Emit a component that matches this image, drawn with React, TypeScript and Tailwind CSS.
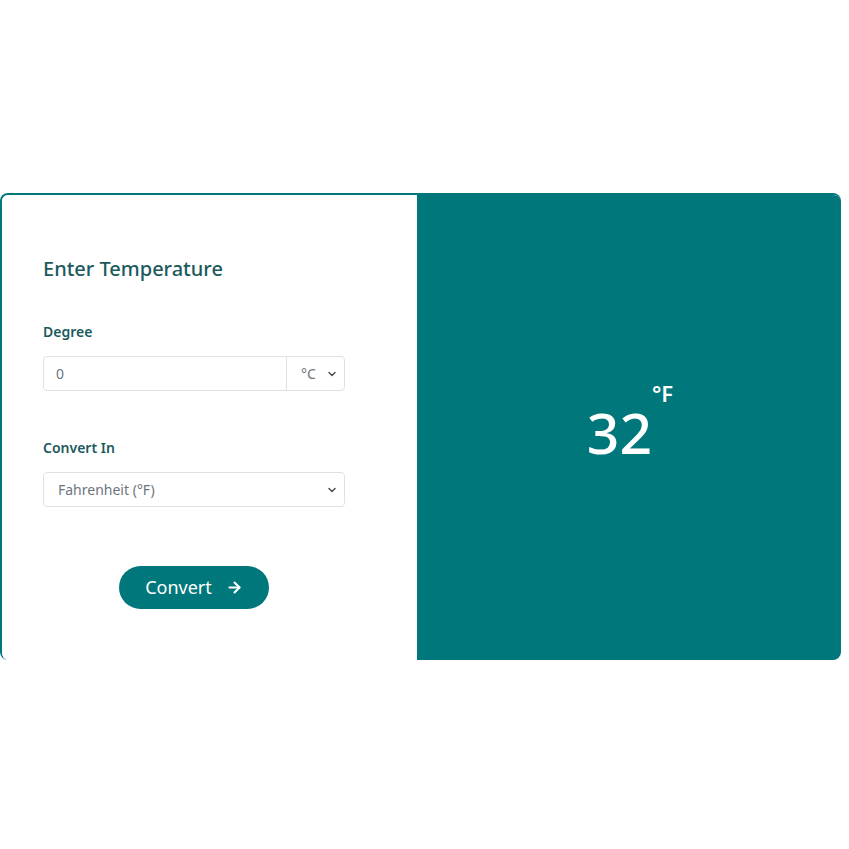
import { ChevronDown, ArrowRight } from "lucide-react";

export default function App() {
  return (
    <div className="min-h-[849px] bg-white pt-[193px] font-['Noto_Sans',sans-serif]">
      <div className="flex w-[841px] h-[467px] rounded-lg border-t-2 border-l-2 border-[#00777b] overflow-hidden">
        {/* Form */}
        <div className="w-[415px] bg-white pl-[41px] pt-[60px]">
          <h2 className="text-[20px] font-medium text-[#1b5a5d] leading-7">Enter Temperature</h2>

          <label className="block mt-[38px] text-[14px] font-semibold text-[#1b5a5d]">Degree</label>
          <div className="mt-[14px] flex w-[302px] h-[35px] rounded border border-[#dee2e6] text-[14px] text-[#6c757d]">
            <div className="flex-1 flex items-center pl-[12px]">0</div>
            <div className="w-[58px] flex items-center justify-between border-l border-[#dee2e6] pl-[14px] pr-[6px]">
              <span>°C</span>
              <ChevronDown className="w-3 h-3 text-[#495057]" strokeWidth={3} />
            </div>
          </div>

          <label className="block mt-[46px] text-[14px] font-semibold text-[#1b5a5d]">Convert In</label>
          <div className="mt-[14px] flex items-center justify-between w-[302px] h-[35px] rounded border border-[#dee2e6] pl-[14px] pr-[6px] text-[14px] text-[#6c757d]">
            <span>Fahrenheit (°F)</span>
            <ChevronDown className="w-3 h-3 text-[#495057]" strokeWidth={3} />
          </div>

          <button className="mt-[59px] ml-[76px] flex items-center justify-center gap-[14px] w-[150px] h-[43px] rounded-full bg-[#00777b] text-white text-[18px]">
            Convert
            <ArrowRight className="w-[17px] h-[17px]" strokeWidth={3} />
          </button>
        </div>

        {/* Result */}
        <div className="flex-1 bg-[#00777b] flex items-center justify-center">
          <div className="flex items-start text-white mt-[10px] ml-[2px]">
            <span className="text-[57px] font-medium leading-none">32</span>
            <span className="text-[22px] font-semibold leading-none -mt-[22px] ml-[0px]">°F</span>
          </div>
        </div>
      </div>
    </div>
  );
}
